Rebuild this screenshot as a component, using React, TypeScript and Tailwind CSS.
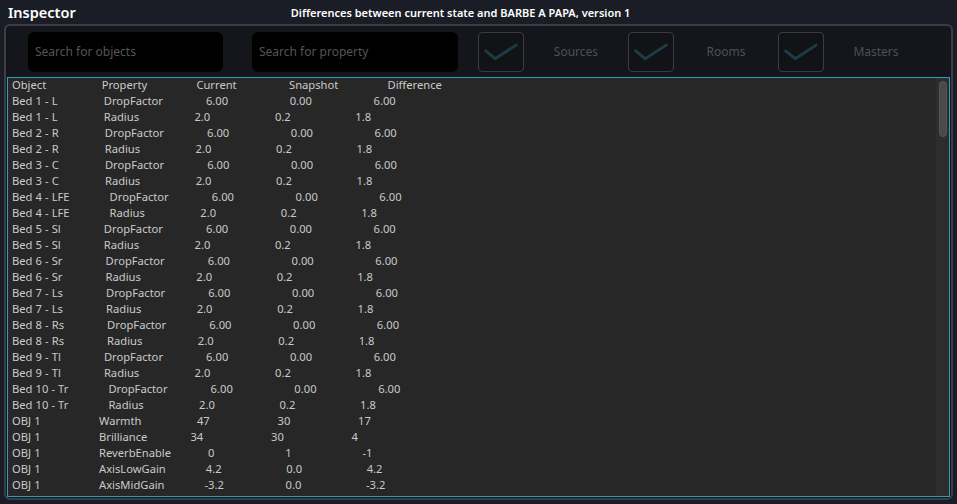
import React from 'react';

const rows: string[][] = [
  ['Bed 1 - L', 'DropFactor', '6.00', '0.00', '6.00'],
  ['Bed 1 - L', 'Radius', '2.0', '0.2', '1.8'],
  ['Bed 2 - R', 'DropFactor', '6.00', '0.00', '6.00'],
  ['Bed 2 - R', 'Radius', '2.0', '0.2', '1.8'],
  ['Bed 3 - C', 'DropFactor', '6.00', '0.00', '6.00'],
  ['Bed 3 - C', 'Radius', '2.0', '0.2', '1.8'],
  ['Bed 4 - LFE', 'DropFactor', '6.00', '0.00', '6.00'],
  ['Bed 4 - LFE', 'Radius', '2.0', '0.2', '1.8'],
  ['Bed 5 - Sl', 'DropFactor', '6.00', '0.00', '6.00'],
  ['Bed 5 - Sl', 'Radius', '2.0', '0.2', '1.8'],
  ['Bed 6 - Sr', 'DropFactor', '6.00', '0.00', '6.00'],
  ['Bed 6 - Sr', 'Radius', '2.0', '0.2', '1.8'],
  ['Bed 7 - Ls', 'DropFactor', '6.00', '0.00', '6.00'],
  ['Bed 7 - Ls', 'Radius', '2.0', '0.2', '1.8'],
  ['Bed 8 - Rs', 'DropFactor', '6.00', '0.00', '6.00'],
  ['Bed 8 - Rs', 'Radius', '2.0', '0.2', '1.8'],
  ['Bed 9 - Tl', 'DropFactor', '6.00', '0.00', '6.00'],
  ['Bed 9 - Tl', 'Radius', '2.0', '0.2', '1.8'],
  ['Bed 10 - Tr', 'DropFactor', '6.00', '0.00', '6.00'],
  ['Bed 10 - Tr', 'Radius', '2.0', '0.2', '1.8'],
  ['OBJ 1', 'Warmth', '47', '30', '17'],
  ['OBJ 1', 'Brilliance', '34', '30', '4'],
  ['OBJ 1', 'ReverbEnable', '0', '1', '-1'],
  ['OBJ 1', 'AxisLowGain', '4.2', '0.0', '4.2'],
  ['OBJ 1', 'AxisMidGain', '-3.2', '0.0', '-3.2'],
];

// the app pads each field with spaces, so columns drift with the text width
const line = (cells: string[]) =>
  cells.map((c, i) => (i < cells.length - 1 ? c.padEnd(24, ' ') : c)).join('');

function CheckBox() {
  return (
    <div className="w-[46px] h-[40px] rounded-[4px] border border-[#3a3d43] bg-[#111317] flex items-center justify-center shrink-0">
      <svg width="46" height="40" viewBox="0 0 46 40">
        <path d="M6 18 L17 27 L40 12" fill="none" stroke="#1d3c47" strokeWidth="3" />
      </svg>
    </div>
  );
}

function Filter({ label }: { label: string }) {
  return (
    <div className="flex items-center">
      <CheckBox />
      <span className="w-[104px] text-center text-[12px] text-[#4c5058]">{label}</span>
    </div>
  );
}

export default function App() {
  return (
    <div className="w-[957px] h-[504px] bg-[#1a1d25] flex flex-col font-['Noto_Sans',sans-serif] overflow-hidden">
      {/* title bar */}
      <div className="h-[24px] flex items-center shrink-0">
        <span className="pl-[8px] text-[14.5px] font-semibold text-white leading-none">Inspector</span>
        <span className="ml-[215px] text-[11px] font-semibold text-white leading-none">
          Differences between current state and BARBE A PAPA, version 1
        </span>
      </div>

      {/* main panel */}
      <div className="mx-[4px] mb-[4px] flex-1 rounded-[6px] border-2 border-[#3b3e45] bg-[#14161b] flex flex-col px-[1px] pb-[1px]">
        <div className="h-[51px] flex items-center pl-[21px] pt-[1px] shrink-0">
          <div className="w-[195px] h-[40px] rounded-[6px] bg-black flex items-center px-[7px] text-[12px] text-[#555]">
            Search for objects
          </div>
          <div className="ml-[29px] w-[206px] h-[40px] rounded-[6px] bg-black flex items-center px-[7px] text-[12px] text-[#555]">
            Search for property
          </div>
          <div className="ml-[20px] flex">
            <Filter label="Sources" />
            <Filter label="Rooms" />
            <Filter label="Masters" />
          </div>
        </div>

        {/* difference list */}
        <div className="flex-1 border border-[#2b9ec0] bg-[#272727] flex overflow-hidden">
          <div className="flex-1 pl-[4px] -mt-[1px] text-[11.2px] leading-[16px] text-[#cacaca] whitespace-pre [word-spacing:0.17px]">
            <div>{line(['Object', 'Property', 'Current', 'Snapshot', 'Difference'])}</div>
            {rows.map((r, i) => (
              <div key={i}>{line(r)}</div>
            ))}
          </div>
          <div className="w-[13px] bg-[#2d2d2d] flex justify-center pt-[3px]">
            <div className="w-[8px] h-[56px] rounded-full bg-[#4a4a4a] border border-[#555]" />
          </div>
        </div>
      </div>
    </div>
  );
}
